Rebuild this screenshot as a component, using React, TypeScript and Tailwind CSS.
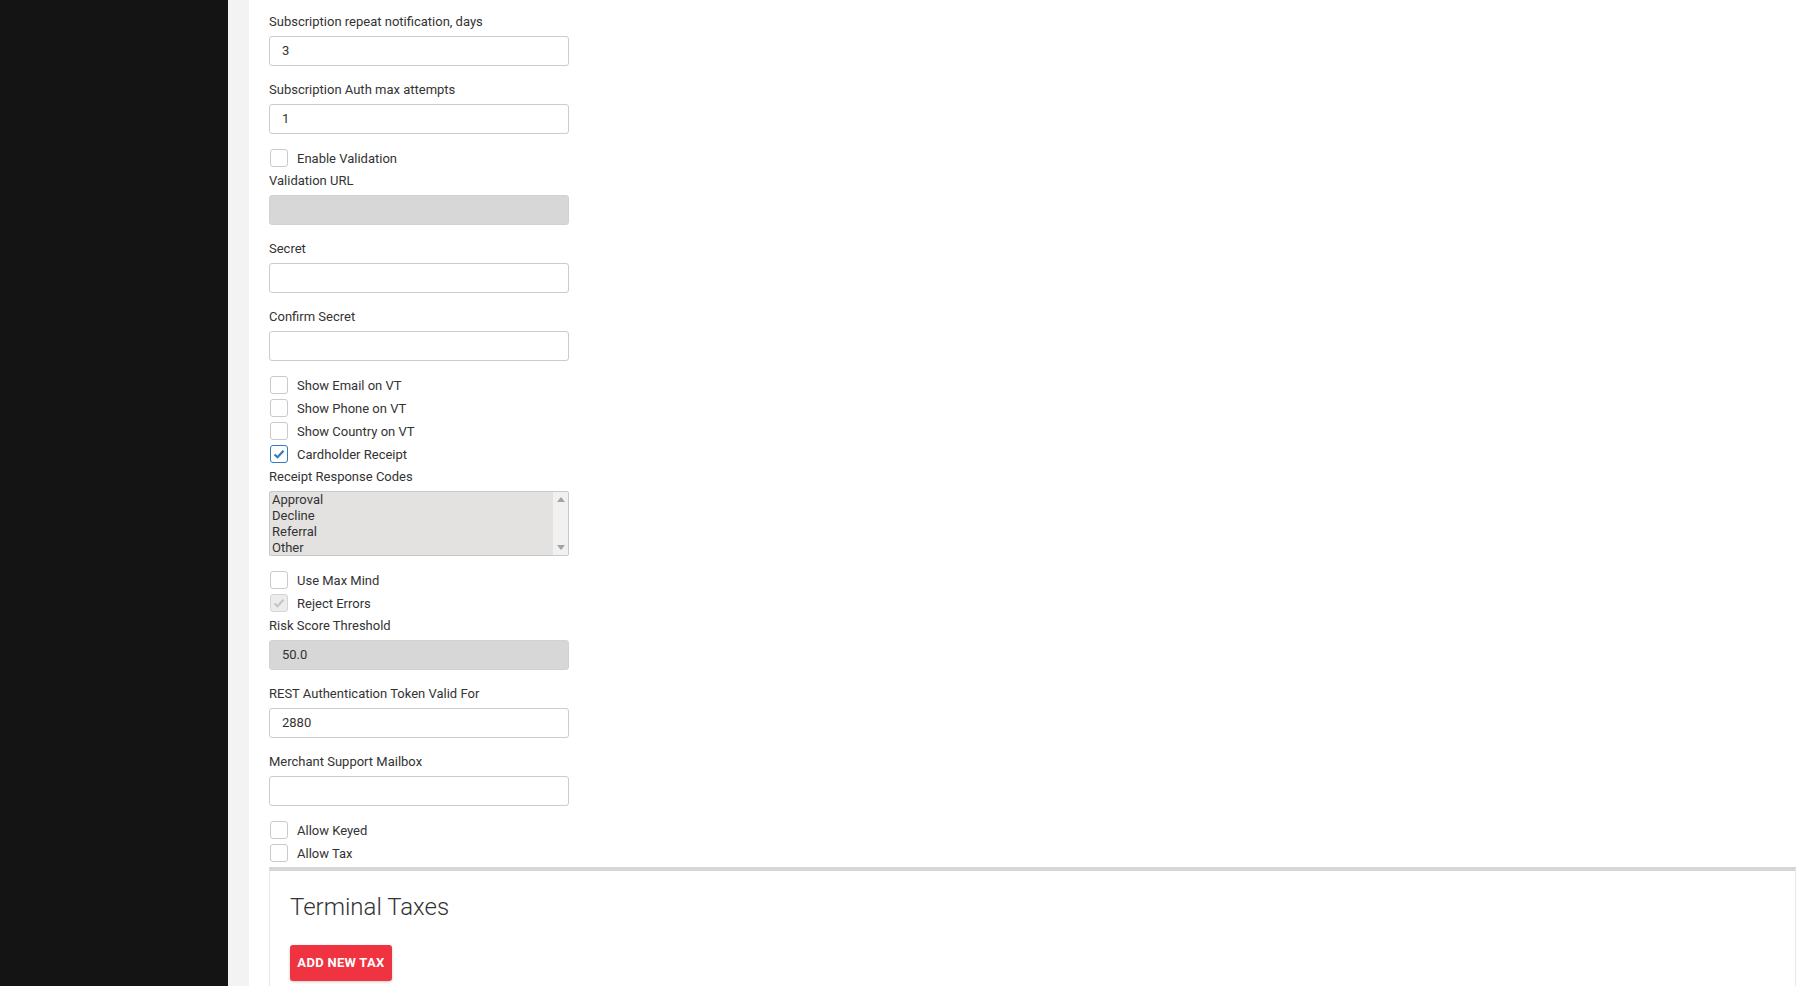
import React from "react";

function Label({ children }: { children: React.ReactNode }) {
  return <div className="text-[13px] leading-[20px] pt-[1px] mb-[4px]">{children}</div>;
}

function Field({ label, value = "", disabled = false }: { label: string; value?: string; disabled?: boolean }) {
  return (
    <div className="mb-[13px]">
      <Label>{label}</Label>
      <div
        className={`h-[30px] w-[300px] flex items-center px-[12px] rounded-[3px] border text-[13px] ${
          disabled ? "bg-[#d7d7d7] border-[#d2d2d2]" : "bg-white border-[#cccccc]"
        }`}
      >
        {value}
      </div>
    </div>
  );
}

function Check({ label, checked = false, disabled = false }: { label: string; checked?: boolean; disabled?: boolean }) {
  const box = checked && !disabled
    ? "border-[#2f7bbd] bg-white"
    : disabled
    ? "border-[#d4d4d4] bg-[#ececec]"
    : "border-[#cacaca] bg-white";
  return (
    <div className="h-[23px] flex items-center">
      <div className={`ml-[1px] -mt-[1px] w-[18px] h-[18px] border rounded-[3px] flex items-center justify-center ${box}`}>
        {checked && (
          <svg width="12" height="10" viewBox="0 0 12 10">
            <polyline
              points="1.5,5.5 4.5,8.2 10.5,1.8"
              fill="none"
              stroke={disabled ? "#c4c4c4" : "#2f7bbd"}
              strokeWidth="2.2"
            />
          </svg>
        )}
      </div>
      <span className="ml-[9px] text-[13px]">{label}</span>
    </div>
  );
}

export default function App() {
  return (
    <div className="flex h-screen overflow-hidden text-[#333] font-['Roboto',sans-serif]">
      <div className="w-[228px] shrink-0 bg-[#141414]" />
      <div className="w-[21px] shrink-0 bg-[#f3f3f3]" />
      <main className="flex-1 bg-white px-[20px] pt-[11px]">
        <Field label="Subscription repeat notification, days" value="3" />
        <Field label="Subscription Auth max attempts" value="1" />
        <Check label="Enable Validation" />
        <Field label="Validation URL" disabled />
        <Field label="Secret" />
        <Field label="Confirm Secret" />

        <Check label="Show Email on VT" />
        <Check label="Show Phone on VT" />
        <Check label="Show Country on VT" />
        <Check label="Cardholder Receipt" checked />
        <Label>Receipt Response Codes</Label>
        <div className="mb-[13px] w-[300px] h-[65px] flex border border-[#c9c9c9] rounded-[2px] bg-[#e4e2e0] overflow-hidden">
          <div className="flex-1 pl-[2px] text-[13px] leading-[16px]">
            <div>Approval</div>
            <div>Decline</div>
            <div>Referral</div>
            <div>Other</div>
          </div>
          <div className="w-[15px] bg-[#f1f1f1] flex flex-col items-center justify-between py-[5px]">
            <svg width="8" height="5" viewBox="0 0 8 5">
              <polygon points="0,5 8,5 4,0" fill="#a3a3a3" />
            </svg>
            <svg width="8" height="5" viewBox="0 0 8 5">
              <polygon points="0,0 8,0 4,5" fill="#a3a3a3" />
            </svg>
          </div>
        </div>

        <Check label="Use Max Mind" />
        <Check label="Reject Errors" checked disabled />
        <Field label="Risk Score Threshold" value="50.0" disabled />
        <Field label="REST Authentication Token Valid For" value="2880" />
        <Field label="Merchant Support Mailbox" />
        <Check label="Allow Keyed" />
        <Check label="Allow Tax" />

        <div className="mt-[2px] border-t-4 border-t-[#d6d6d6] border-x border-x-[#e8e8e8] px-[20px] pt-[20px] pb-[20px]">
          <h2 className="text-[24px] font-light leading-[32px] text-[#333]">Terminal Taxes</h2>
          <button className="mt-[22px] h-[36px] px-[6px] w-[102px] rounded-[3px] bg-[#ef3340] text-white text-[13px] font-bold tracking-[0.3px] shadow-[0_1px_3px_rgba(0,0,0,0.2)]">
            ADD NEW TAX
          </button>
        </div>
      </main>
    </div>
  );
}
